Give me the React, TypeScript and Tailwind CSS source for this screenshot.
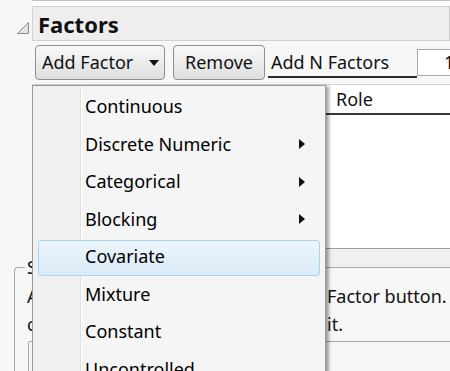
import React from 'react';

const items = [
  { label: 'Continuous', sub: false },
  { label: 'Discrete Numeric', sub: true },
  { label: 'Categorical', sub: true },
  { label: 'Blocking', sub: true },
  { label: 'Covariate', sub: false, active: true },
  { label: 'Mixture', sub: false },
  { label: 'Constant', sub: false },
  { label: 'Uncontrolled', sub: false },
];

const SubArrow = () => (
  <svg width="6" height="10" viewBox="0 0 6 10">
    <path d="M0 0 L6 5 L0 10 Z" fill="#111" />
  </svg>
);

const App: React.FC = () => {
  return (
    <div className="relative w-[450px] h-[371px] overflow-hidden bg-[#f7f7f7] text-[#111] font-['Noto_Sans',sans-serif]">
      {/* top strip */}
      <div className="ml-[32px] h-[6px] border-t border-[#c4c4c4] bg-white" />

      {/* outline header */}
      <div className="flex h-[35px]">
        <div className="w-[32px] shrink-0 flex items-end justify-end pr-[2px] pb-[6px]">
          <svg width="14" height="14" viewBox="0 0 14 14">
            <path d="M12.5 1.5 L12.5 12.5 L1.5 12.5 Z" fill="#e4e4e4" stroke="#8c8c8c" strokeWidth="1" />
          </svg>
        </div>
        <div className="flex-1 flex items-center border border-[#d0d0d0] bg-[#eeeeee] pl-[5px]">
          <span className="text-[22px] font-bold leading-none">Factors</span>
        </div>
      </div>

      {/* buttons row */}
      <div className="flex items-center mt-[4px] pl-[35px] h-[35px]">
        <div className="shrink-0 w-[130px] h-[35px] flex items-center rounded-[4px] border border-[#8f8f8f] bg-gradient-to-b from-[#f9f9f9] to-[#dedede] pl-[6px] text-[18px]">
          <span>Add Factor</span>
          <svg className="ml-[16px]" width="10" height="6" viewBox="0 0 10 6">
            <path d="M0 0 L10 0 L5 6 Z" fill="#111" />
          </svg>
        </div>
        <div className="shrink-0 ml-[8px] w-[92px] h-[35px] flex items-center justify-center rounded-[4px] border border-[#8f8f8f] bg-gradient-to-b from-[#f9f9f9] to-[#dedede] text-[18px]">
          Remove
        </div>
        <div className="shrink-0 ml-[3px] w-[149px] h-[33px] self-start flex items-center border-b-2 border-[#2c2c2c] pl-[3px] pt-[3px] text-[18px]">
          Add N Factors
        </div>
        <div className="shrink-0 w-[60px] h-[27px] self-start mt-[4px] flex items-center border border-[#a8a8a8] bg-white pl-[26px] text-[18px]">
          1
        </div>
      </div>

      {/* factor table */}
      <div className="mt-[4px] ml-[32px] border-t border-[#d6d6d6] bg-white">
        <div className="flex h-[30px] border-b-2 border-[#3a3a3a]">
          <div className="w-[294px] border-r border-[#d6d6d6] pl-[6px] flex items-center text-[18px]">Name</div>
          <div className="flex-1 flex items-center pl-[10px] text-[18px]">Role</div>
        </div>
        <div className="h-[134px] border-b border-[#9c9c9c]" />
      </div>
      <div className="ml-[32px] h-[18px] bg-[#f0f0f0]" />

      {/* specify factor group */}
      <div className="relative ml-[14px] border-l border-t border-[#a8a8a8] rounded-tl-[4px] pt-[14px] pl-[12px] text-[18px] leading-[28px]">
        <span className="absolute left-[10px] -top-[15px] bg-[#f7f7f7] px-[2px] leading-[28px]">Specify Factors</span>
        <div className="flex whitespace-nowrap">
          <span className="inline-block w-[300px] overflow-hidden">Add a factor by clicking the Add</span>
          <span>Factor button.</span>
        </div>
        <div className="flex whitespace-nowrap">
          <span className="inline-block w-[300px] overflow-hidden">click on a value to edit</span>
          <span>it.</span>
        </div>
        <div className="ml-[1px] mt-[3px] h-[40px] border-l border-t border-[#a8a8a8] rounded-tl-[2px]" />
      </div>

      {/* dropdown menu */}
      <div className="absolute left-[32px] top-[85px] w-[294px] h-[300px] border-l border-t border-r border-[#9a9a9a] shadow-[3px_1px_3px_rgba(0,0,0,0.35)] bg-[linear-gradient(to_right,#f0f0f0_47px,#e0e0e0_47px,#e0e0e0_48px,#ffffff_48px,#ffffff_49px,#f5f5f5_49px)] pt-[4px] text-[18px] text-black">
        {items.map((it) => (
          <div
            key={it.label}
            className={
              'mx-[5px] mb-[1.5px] h-[36px] flex items-center justify-between rounded-[3px] border pl-[46px] pr-[14px] pb-[3px] ' +
              (it.active
                ? 'border-[#a6d6f3] bg-gradient-to-b from-[#ecf5fc] to-[#dcebf7]'
                : 'border-transparent')
            }
          >
            <span>{it.label}</span>
            {it.sub && <SubArrow />}
          </div>
        ))}
      </div>
    </div>
  );
};

export default App;
